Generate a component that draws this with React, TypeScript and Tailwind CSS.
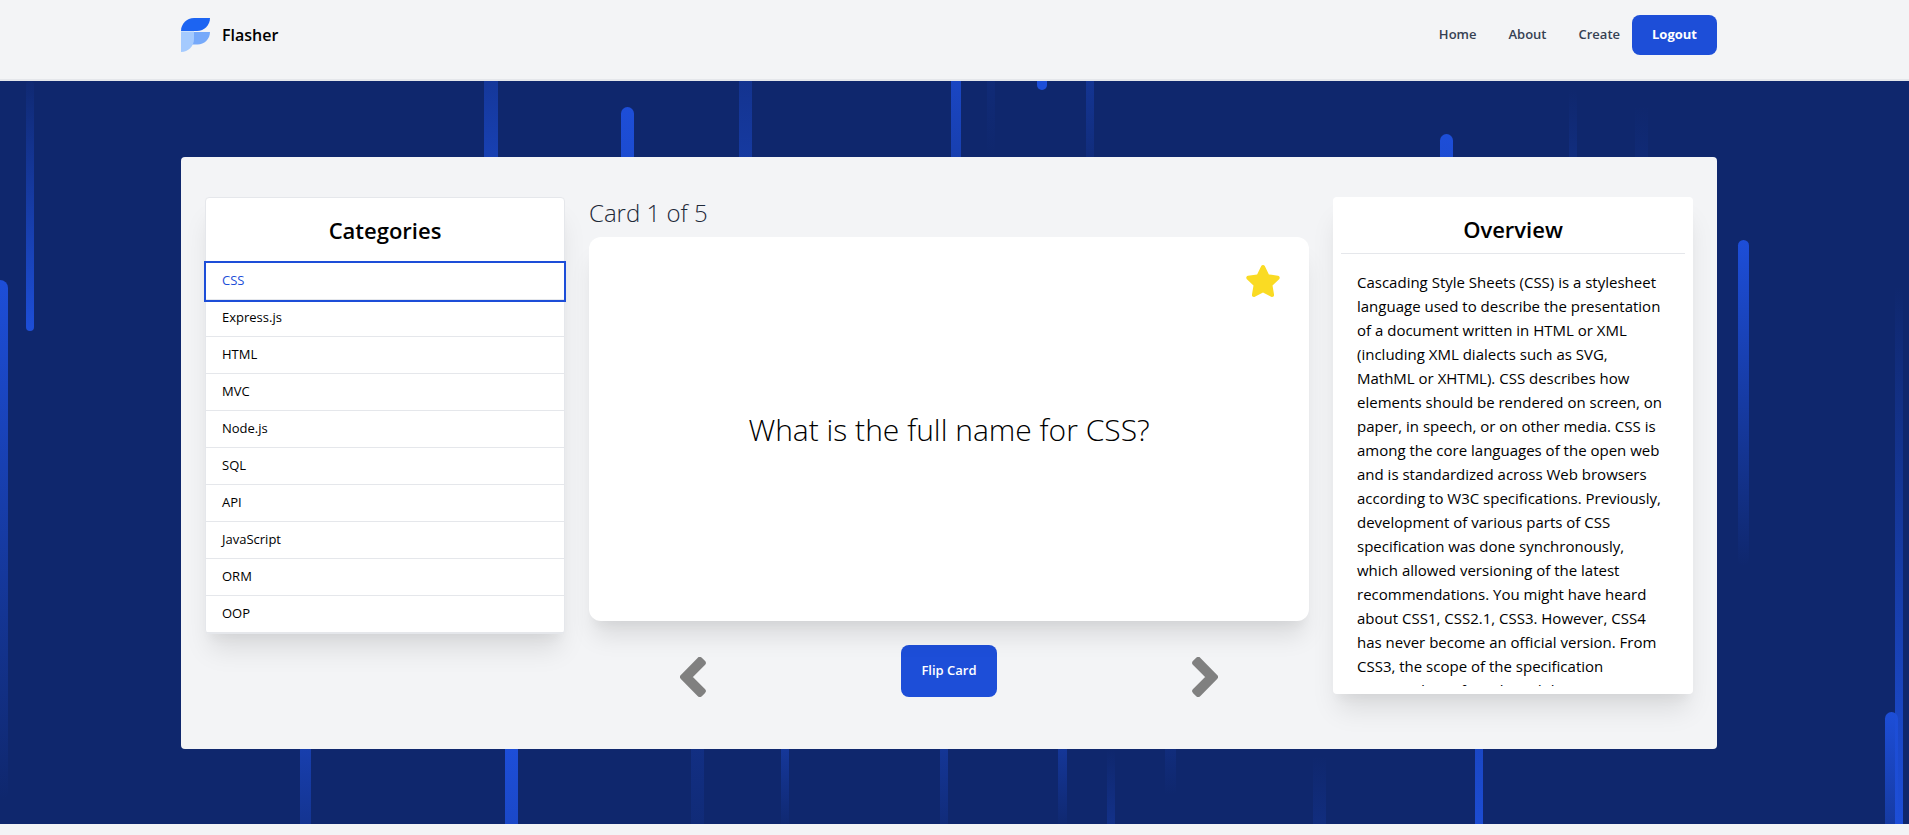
import { useState } from "react";
import { FaStar } from "react-icons/fa";

const categories = ["CSS", "Express.js", "HTML", "MVC", "Node.js", "SQL", "API", "JavaScript", "ORM", "OOP"];

const overview =
  "Cascading Style Sheets (CSS) is a stylesheet language used to describe the presentation of a document written in HTML or XML (including XML dialects such as SVG, MathML or XHTML). CSS describes how elements should be rendered on screen, on paper, in speech, or on other media. CSS is among the core languages of the open web and is standardized across Web browsers according to W3C specifications. Previously, development of various parts of CSS specification was done synchronously, which allowed versioning of the latest recommendations. You might have heard about CSS1, CSS2.1, CSS3. However, CSS4 has never become an official version. From CSS3, the scope of the specification increased significantly and the progress on different CSS modules started to differ.";

type Streak = { x: number; y: number; w: number; h: number; from: number; to: number; round?: boolean };

// Light streaks behind the panel; "from" and "to" are the opacities at the top and bottom ends.
const streaks: Streak[] = [
  { x: 26, y: 0, w: 8, h: 250, from: 0.05, to: 1, round: true },
  { x: -8, y: 199, w: 16, h: 520, from: 1, to: 0, round: true },
  { x: 484, y: 0, w: 14, h: 76, from: 0.42, to: 0.65 },
  { x: 621, y: 26, w: 13, h: 300, from: 1, to: 0.6, round: true },
  { x: 739, y: 0, w: 13, h: 76, from: 0.32, to: 0.48 },
  { x: 951, y: 0, w: 10, h: 76, from: 0.8, to: 0.62 },
  { x: 987, y: 0, w: 8, h: 76, from: 0.09, to: 0 },
  { x: 1037, y: -60, w: 10, h: 69, from: 1, to: 1, round: true },
  { x: 1086, y: 0, w: 8, h: 76, from: 0.35, to: 0.14 },
  { x: 1440, y: 53, w: 13, h: 200, from: 1, to: 0.6, round: true },
  { x: 1569, y: 8, w: 8, h: 68, from: 0, to: 0.16 },
  { x: 1635, y: 24, w: 13, h: 52, from: 0, to: 0.08 },
  { x: 1738, y: 159, w: 11, h: 326, from: 1, to: 0, round: true },
  { x: 1885, y: 631, w: 13, h: 224, from: 1, to: 0, round: true },
  { x: 1895, y: 205, w: 8, h: 538, from: 0, to: 1 },
  { x: 300, y: 668, w: 11, h: 75, from: 0.6, to: 0.34 },
  { x: 505, y: 668, w: 13, h: 75, from: 1, to: 0.85 },
  { x: 691, y: 668, w: 13, h: 75, from: 0.2, to: 0.1 },
  { x: 781, y: 668, w: 8, h: 75, from: 0.42, to: 0.04 },
  { x: 940, y: 668, w: 8, h: 75, from: 0.38, to: 0.12 },
  { x: 1058, y: 668, w: 9, h: 75, from: 0.4, to: 0.03 },
  { x: 1107, y: 668, w: 8, h: 75, from: 0, to: 0.26 },
  { x: 1165, y: 668, w: 11, h: 46, from: 0.14, to: 0 },
  { x: 1313, y: 675, w: 13, h: 68, from: 0, to: 0.16 },
  { x: 1475, y: 668, w: 8, h: 75, from: 0.82, to: 0.94 },
];

function Backdrop() {
  return (
    <svg className="absolute inset-0 h-full w-full" viewBox="0 0 1909 743" preserveAspectRatio="xMidYMid slice" aria-hidden="true">
      <defs>
        {streaks.map((s, i) => (
          <linearGradient key={i} id={`streak-${i}`} x1="0" y1="0" x2="0" y2="1">
            <stop offset="0" stopColor="#1d4ed8" stopOpacity={s.from} />
            <stop offset="1" stopColor="#1d4ed8" stopOpacity={s.to} />
          </linearGradient>
        ))}
      </defs>
      {streaks.map((s, i) => (
        <rect key={i} x={s.x} y={s.y} width={s.w} height={s.h} rx={s.round ? s.w / 2 : 0} fill={`url(#streak-${i})`} />
      ))}
    </svg>
  );
}

function Logo() {
  return (
    <svg className="h-9 w-[29px]" viewBox="0 0 29 36" aria-hidden="true">
      <path d="M13 1h16c0 7.200-5.800 13-13 13H0C0 6.800 5.800 1 13 1Z" fill="#1c64f2" />
      <path d="M13 15h16c0 7.200-5.800 12.500-12.500 12.500H11Z" fill="#76a9fa" />
      <path d="M0 14.500h13V22c0 7.200-5.800 13-13 13Z" fill="#a4cafe" />
    </svg>
  );
}

function Chevron({ points }: { points: string }) {
  return (
    <svg className="h-10 w-[26px]" viewBox="0 0 26 40" fill="gray" stroke="gray" strokeWidth="6" strokeLinejoin="round" aria-hidden="true">
      <polygon points={points} />
    </svg>
  );
}

function Header() {
  return (
    <header className="border-b-2 border-gray-200 bg-gray-100 pr-[11px]">
      <div className="mx-auto flex h-[79px] max-w-screen-2xl items-start justify-between pt-[15px]">
        <a href="#" className="flex h-10 items-center gap-3">
          <Logo />
          <span className="text-[16px] font-semibold">Flasher</span>
        </a>
        <nav className="flex h-10 items-center gap-8 text-[13px] font-semibold text-gray-700">
          <a href="#home">Home</a>
          <a href="#about">About</a>
          <div className="flex items-center gap-3">
            <a href="#create">Create</a>
            <button type="button" className="h-10 rounded-lg bg-[#1d4ed8] px-5 font-bold text-white">
              Logout
            </button>
          </div>
        </nav>
      </div>
    </header>
  );
}

const raised = "shadow-[0_20px_25px_-5px_rgba(0,0,0,0.1),0_10px_10px_-5px_rgba(0,0,0,0.04)]";

export default function App() {
  const [selected, setSelected] = useState("CSS");
  return (
    <div className="min-h-screen bg-gray-100 font-['Open_Sans','Noto_Sans',sans-serif] text-black">
      <Header />
      <main className="relative overflow-hidden bg-[#0f276d] pt-[76px] pr-[11px] pb-[75px]">
        <Backdrop />
        <div className="relative mx-auto grid max-w-screen-2xl grid-cols-[1fr_2fr_1fr] items-start gap-6 rounded bg-gray-100 px-6 py-10">
          <section className={`rounded border border-gray-200 bg-white ${raised}`}>
            <h2 className="flex h-[65px] items-center justify-center text-[22px] font-semibold">Categories</h2>
            <ul className="text-[13px]">
              {categories.map((name) => (
                <li key={name} className="flex">
                  <button
                    type="button"
                    onClick={() => setSelected(name)}
                    className={
                      name === selected
                        ? "h-[37px] w-full border-b border-gray-200 px-4 text-left text-[#1d4ed8] outline-2 outline-[#1d4ed8]"
                        : "h-[37px] w-full border-b border-gray-200 px-4 text-left"
                    }
                  >
                    {name}
                  </button>
                </li>
              ))}
            </ul>
          </section>

          <section>
            <p className="h-10 text-[24px] leading-8 font-light text-gray-800">Card 1 of 5</p>
            <div className={`relative flex h-96 items-center justify-center rounded-xl bg-white ${raised}`}>
              <button type="button" aria-label="Favourite" className="absolute top-7 right-7">
                <FaStar className="h-8 w-9 text-[#fadb23]" />
              </button>
              <p className="text-[30px] font-light">What is the full name for CSS?</p>
            </div>
            <div className="mt-6 flex items-start justify-between px-20">
              <button type="button" aria-label="Previous card" className="flex h-16 w-12 items-center justify-center">
                <Chevron points="3,20 19.700,3 22.800,6 8.800,20 22.800,34 19.700,37" />
              </button>
              <button type="button" className="h-[52px] rounded-lg bg-[#1d4ed8] px-5 text-[13px] font-semibold text-white">
                Flip Card
              </button>
              <button type="button" aria-label="Next card" className="flex h-16 w-12 items-center justify-center">
                <Chevron points="23,20 6.300,3 3.200,6 17.200,20 3.200,34 6.300,37" />
              </button>
            </div>
          </section>

          <section className={`rounded bg-white p-2 ${raised}`}>
            <h2 className="flex h-[49px] items-center justify-center border-b border-gray-200 text-[22px] font-semibold">Overview</h2>
            <div className="h-[432px] overflow-x-hidden overflow-y-auto px-4 pt-4 [scrollbar-width:none]">
              <p className="text-[15px] leading-6">{overview}</p>
            </div>
          </section>
        </div>
      </main>
    </div>
  );
}
